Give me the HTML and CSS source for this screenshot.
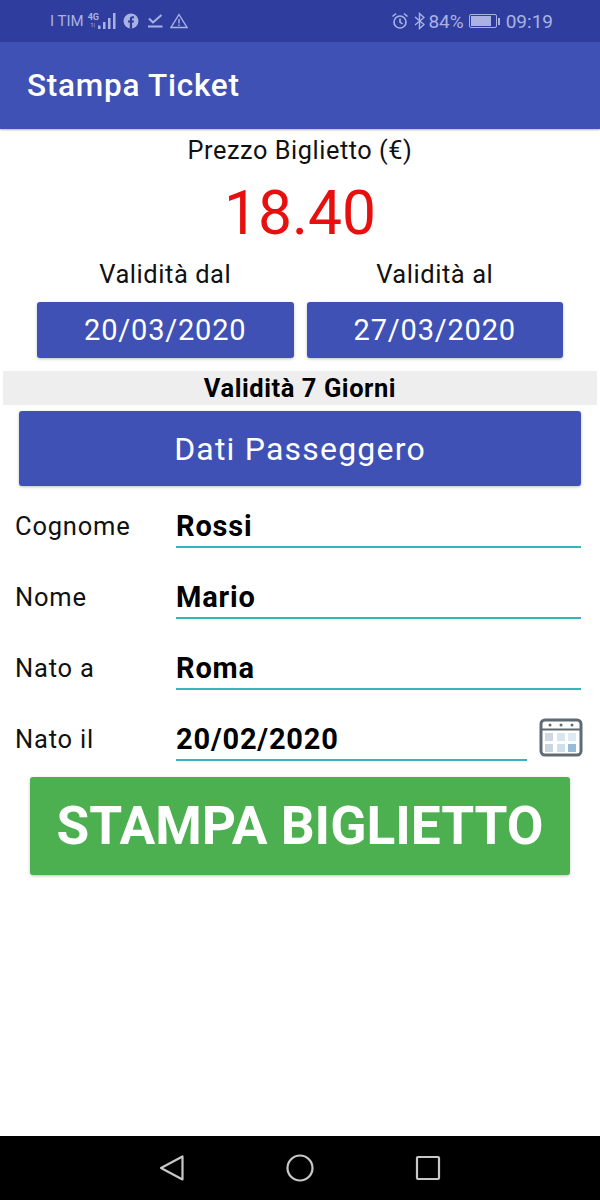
FILE: index.html
```html
<!DOCTYPE html>
<html lang="en">
<head>
    <meta charset="UTF-8">
    <title>Stampa Ticket</title>
    <link rel="stylesheet" href="styles.css">
</head>
<body>
<div class="phone">
    <div class="status-bar">
        <div class="status-left">
            <span class="carrier">I TIM</span>
            <span class="net"><span>4G</span><span class="net-small">1|</span></span>
            <svg class="signal" width="18" height="16" viewBox="0 0 18 16"><g fill="#a9b2e3"><rect x="0" y="12.500" width="2.500" height="3.500"/><rect x="5" y="9" width="2.500" height="7"/><rect x="10" y="5" width="2.500" height="11"/><rect x="15" y="0" width="2.500" height="16"/></g></svg>
            <svg class="fb" width="16" height="16" viewBox="0 0 16 16"><circle cx="8" cy="8" r="7.500" fill="#a9b2e3"/><path d="M6.800 15.500V9.600H5V7.500h1.800V6c0-1.800 1.100-2.800 2.700-2.800h1.500v2H10c-.7 0-.9.400-.9 1v1.300h1.900l-.3 2.100H9.100v5.900z" fill="#2f3e9e"/></svg>
            <svg class="check" width="15" height="14" viewBox="0 0 15 14" fill="none" stroke="#a9b2e3" stroke-width="2"><path d="M1 4.500l4 4L13.500 1"/><path d="M0 12.500h14.500"/></svg>
            <svg class="warn" width="18" height="16" viewBox="0 0 18 16" fill="none" stroke="#a9b2e3" stroke-width="1.400"><path d="M9 1.500L17 14.500H1z"/><path d="M9 6v4.500M9 11.500v1.500"/></svg>
        </div>
        <div class="status-right">
            <svg class="alarm" width="18" height="18" viewBox="0 0 18 18" fill="none" stroke="#a9b2e3" stroke-width="1.600"><circle cx="9" cy="10" r="6"/><path d="M9 6.500V10l2.500 2M1.500 4.500L5 1.500M16.500 4.500L13 1.500"/></svg>
            <svg class="bt" width="11" height="18" viewBox="0 0 11 18" fill="none" stroke="#a9b2e3" stroke-width="1.400"><path d="M1 5l9 7.500L5.500 16.500V1.500L10 5.500 1 13"/></svg>
            <span class="battery-pct">84%</span>
            <span class="battery"><span class="battery-level"></span></span>
            <span class="battery-tip"></span>
            <span class="clock">09:19</span>
        </div>
    </div>
    <div class="app-bar">Stampa Ticket</div>

    <main class="content">
        <div class="price-label">Prezzo Biglietto (€)</div>
        <div class="price">18.40</div>

        <div class="dates">
            <div class="date-col">
                <div class="date-label">Validità dal</div>
                <div class="btn date-btn">20/03/2020</div>
            </div>
            <div class="date-col">
                <div class="date-label">Validità al</div>
                <div class="btn date-btn">27/03/2020</div>
            </div>
        </div>

        <div class="validity">Validità 7 Giorni</div>
        <div class="btn section-btn">Dati Passeggero</div>

        <div class="form">
            <div class="row">
                <span class="row-label">Cognome</span>
                <span class="field">Rossi</span>
            </div>
            <div class="row">
                <span class="row-label">Nome</span>
                <span class="field">Mario</span>
            </div>
            <div class="row">
                <span class="row-label">Nato a</span>
                <span class="field">Roma</span>
            </div>
            <div class="row">
                <span class="row-label">Nato il</span>
                <span class="field">20/02/2020</span>
                <svg class="cal" width="44" height="40" viewBox="0 0 44 40">
                    <rect x="2" y="2" width="40" height="35" rx="4" fill="#fff" stroke="#5f6a72" stroke-width="3"/>
                    <path d="M2 11.500h40" stroke="#5f6a72" stroke-width="2"/>
                    <g fill="#5f6a72"><circle cx="11" cy="7" r="1.500"/><circle cx="22" cy="7" r="1.500"/><circle cx="33" cy="7" r="1.500"/></g>
                    <rect x="6" y="15" width="8" height="8" fill="#cfd9e4"/>
                    <rect x="18" y="15" width="8" height="8" fill="#d9e5ef"/>
                    <rect x="29" y="15" width="8" height="8" fill="#dcebf5"/>
                    <rect x="6" y="26" width="8" height="8" fill="#c9d6e2"/>
                    <rect x="18" y="26" width="8" height="8" fill="#cfdfeb"/>
                    <rect x="29" y="26" width="8" height="8" fill="#95bddb"/>
                </svg>
            </div>
        </div>

        <div class="btn print-btn">STAMPA BIGLIETTO</div>
    </main>

    <div class="nav-bar">
        <svg width="26" height="28" viewBox="0 0 26 28" fill="none" stroke="#c8c8c8" stroke-width="2.200" stroke-linejoin="round"><path d="M23.500 2.500v23L2 14z"/></svg>
        <svg width="28" height="28" viewBox="0 0 28 28" fill="none" stroke="#c8c8c8" stroke-width="2.200"><circle cx="14" cy="14" r="12.500"/></svg>
        <svg width="26" height="26" viewBox="0 0 26 26" fill="none" stroke="#c8c8c8" stroke-width="2.200" stroke-linejoin="round"><rect x="2" y="2" width="22" height="22" rx="1"/></svg>
    </div>
</div>
</body>
</html>
```
FILE: styles.css
```css
body {
    margin: 0;
    font-family: Roboto, "Liberation Sans", sans-serif;
    background-color: #fff;
}

.phone {
    width: 600px;
    height: 1200px;
    display: flex;
    flex-direction: column;
    overflow: hidden;
}

.status-bar {
    height: 42px;
    background-color: #2f3e9e;
    color: #a9b2e3;
    display: flex;
    justify-content: space-between;
    align-items: center;
    padding: 0 47px 0 50px;
    font-size: 16px;
}

.status-left,
.status-right {
    display: flex;
    align-items: center;
}

.carrier {
    font-size: 15px;
}

.net {
    display: flex;
    flex-direction: column;
    width: 10px;
    font-size: 9px;
    font-weight: 700;
    line-height: 8px;
    margin-left: 4px;
}

.net-small {
    font-weight: 400;
    font-size: 6px;
    text-align: center;
}

.fb {
    margin-left: 7px;
}

.check {
    margin-left: 9px;
}

.warn {
    margin-left: 7px;
}

.bt {
    margin-left: 5px;
    margin-right: 3px;
}

.battery-pct {
    font-size: 19px;
    margin-right: 5px;
}

.battery {
    width: 28px;
    height: 14px;
    border: 1px solid #a9b2e3;
    border-radius: 2px;
    padding: 1px;
    box-sizing: border-box;
}

.battery-level {
    display: block;
    width: 84%;
    height: 100%;
    background-color: #a9b2e3;
}

.battery-tip {
    width: 2px;
    height: 7px;
    background-color: #a9b2e3;
    margin: 0 6px 0 1px;
}

.clock {
    font-size: 19px;
}

.app-bar {
    height: 87px;
    background-color: #3f51b5;
    color: #fff;
    display: flex;
    align-items: center;
    padding-left: 27px;
    font-size: 31.5px;
    letter-spacing: 0.75px;
    font-weight: 500;
    box-shadow: 0 1px 2px rgba(0, 0, 0, 0.3);
    position: relative;
}

.content {
    flex: 1;
    display: flex;
    flex-direction: column;
}

.price-label {
    margin-top: 7px;
    text-align: center;
    font-size: 25.3px;
    letter-spacing: 0.55px;
    line-height: 30px;
    color: #111;
}

.price {
    text-align: center;
    font-size: 60.5px;
    line-height: 70px;
    margin-top: 13px;
    color: #e8100f;
}

.dates {
    display: flex;
    justify-content: center;
    gap: 13px;
    margin-top: 10px;
}

.date-col {
    width: 256.5px;
}

.date-label {
    text-align: center;
    font-size: 25.5px;
    letter-spacing: 0.55px;
    line-height: 30px;
    margin-bottom: 13px;
    color: #111;
}

.btn {
    background-color: #3f51b5;
    color: #fff;
    display: flex;
    justify-content: center;
    align-items: center;
    border-radius: 3px;
    box-shadow: 0 1px 3px rgba(0, 0, 0, 0.25);
}

.date-btn {
    height: 56px;
    font-size: 29px;
    letter-spacing: 0.8px;
}

.validity {
    margin: 13px 3px 0;
    height: 34px;
    background-color: #eeeeee;
    color: #000;
    display: flex;
    justify-content: center;
    align-items: center;
    font-size: 25.5px;
    letter-spacing: 0.56px;
    font-weight: 700;
}

.section-btn {
    margin: 6px 19px 0;
    height: 75px;
    font-size: 32px;
    letter-spacing: 1.2px;
}

.form {
    padding: 0 19px 0 15px;
    margin-top: -9px;
}

.row {
    height: 71px;
    display: flex;
    align-items: flex-end;
}

.row-label {
    width: 161px;
    flex-shrink: 0;
    font-size: 25.5px;
    letter-spacing: 0.8px;
    line-height: 30px;
    padding-bottom: 7px;
    color: #111;
}

.field {
    flex: 1;
    height: 41px;
    line-height: 38px;
    box-sizing: border-box;
    border-bottom: 2px solid #35b5bb;
    font-size: 29px;
    letter-spacing: 0.8px;
    font-weight: 700;
    color: #000;
}

.cal {
    margin: 0 -2px 0 12px;
    position: relative;
    top: -3px;
}

.print-btn {
    margin: 16px 30px 0;
    height: 98px;
    background-color: #4caf50;
    font-size: 53.2px;
    font-weight: 700;
}

.nav-bar {
    height: 64px;
    background-color: #000;
    display: flex;
    justify-content: center;
    align-items: center;
    gap: 101px;
}
```
